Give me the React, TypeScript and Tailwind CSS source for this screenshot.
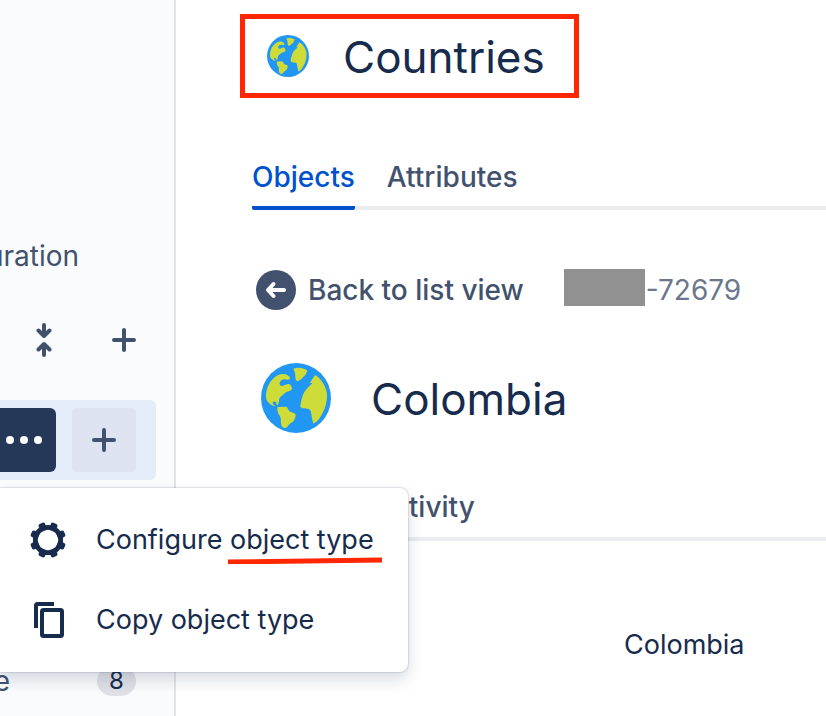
import type { ReactNode } from "react";

function Globe({ className }: { className: string }) {
  return (
    <svg viewBox="0 0 210 210" className={className} aria-hidden="true">
      <circle cx="105" cy="105" r="105" fill="#2196f3" />
      <g fill="#cddc39">
        <path d="M15 102C14 72 32 42 58 34C68 31 80 33 86 42C89 47 84 51 79 50C70 46 58 50 56 59C55 68 62 71 69 67C75 64 84 60 89 66C92 71 95 79 90 82C84 86 77 85 72 90C66 95 62 99 57 103C53 108 55 116 52 123C50 128 46 126 46 120C45 115 38 114 35 118C34 122 38 126 44 130C36 130 29 125 24 120C18 116 15 110 15 102Z" />
        <path d="M97 17C110 12 129 15 139 23C135 36 123 48 109 55C104 52 103 46 103 38C102 29 100 23 97 17Z" />
        <path d="M49 132L77 131C81 136 82 142 88 146C96 149 105 150 104 158C102 167 99 176 90 180C83 184 80 194 72 195C64 193 61 190 60 182C59 174 61 167 57 160C51 152 48 142 49 132Z" />
        <path d="M146 61L162 36C176 43 192 64 197 86C200 103 196 129 186 148C178 164 170 176 158 182C153 174 153 163 151 153C150 144 147 137 139 137C130 137 119 137 118 130C119 119 123 102 128 91C133 80 143 72 151 64C156 59 152 60 146 61Z" />
      </g>
    </svg>
  );
}

function Plus() {
  return (
    <svg viewBox="0 0 24 24" className="size-6" fill="none" stroke="currentColor" strokeWidth="4" strokeLinecap="round" aria-hidden="true">
      <path d="M12 2v20M2 12h20" />
    </svg>
  );
}

function Collapse() {
  return (
    <svg viewBox="0 0 16 34" className="h-[34px] w-4" fill="none" stroke="currentColor" strokeWidth="4" strokeLinecap="round" strokeLinejoin="round" aria-hidden="true">
      <path d="M8 2v11M2.500 7.500 8 13l5.500-5.500M8 32V21M2.500 26.500 8 21l5.500 5.500" />
    </svg>
  );
}

function Gear() {
  return (
    <svg viewBox="0 0 36 36" className="size-9" aria-hidden="true">
      <g fill="currentColor">
        {[22.5, 67.5, 112.5, 157.5, 202.5, 247.5, 292.5, 337.5].map((a) => (
          <rect key={a} x="14.500" y="0" width="7" height="8" rx="2" transform={`rotate(${a} 18 18)`} />
        ))}
      </g>
      <circle cx="18" cy="18" r="12.700" fill="none" stroke="currentColor" strokeWidth="4.800" />
    </svg>
  );
}

function Copy() {
  return (
    <svg viewBox="0 0 36 36" className="size-9" fill="none" stroke="currentColor" strokeWidth="4" aria-hidden="true">
      <path d="M6 26V3.500Q6 2 7.500 2H24" />
      <rect x="12" y="8" width="20" height="26" rx="1.500" />
    </svg>
  );
}

function MenuItem({ icon, children }: { icon: ReactNode; children: ReactNode }) {
  return (
    <button type="button" role="menuitem" className="flex h-20 w-full items-center gap-[30px] pl-[30px] text-left">
      {icon}
      <span>{children}</span>
    </button>
  );
}

function Sidebar() {
  return (
    <aside className="flex w-44 shrink-0 flex-col border-r-2 border-[#e3e4e6] bg-[#fafbfc] pt-59 text-[#42526e]">
      <div className="flex h-10 w-20 items-center justify-end pr-px">
        <a href="#configuration">uration</a>
      </div>

      <div className="flex h-31 items-center justify-end gap-14 pt-1 pr-[38px]">
        <button type="button" aria-label="Collapse all" className="flex w-6 justify-center">
          <Collapse />
        </button>
        <button type="button" aria-label="Add object type">
          <Plus />
        </button>
      </div>

      <div className="relative mr-[18px] flex h-20 items-center justify-between rounded-r-md bg-[#e4ecf9] pr-5">
        <button
          type="button"
          aria-label="More actions"
          aria-expanded="true"
          className="flex h-16 w-14 items-center gap-1.5 rounded-r-md bg-[#253858] pl-1.5"
        >
          <span className="size-2 rounded-full bg-white" />
          <span className="size-2 rounded-full bg-white" />
          <span className="size-2 rounded-full bg-white" />
        </button>
        <button
          type="button"
          aria-label="Add child"
          className="flex size-16 items-center justify-center rounded-md bg-[#dde3f0]"
        >
          <Plus />
        </button>

        <div
          role="menu"
          className="absolute top-full left-0 z-10 mt-2 w-102 rounded-r-lg bg-white py-3 text-[27px] text-[#172b4d] shadow-[0_8px_16px_rgba(9,30,66,0.15),0_0_2px_rgba(9,30,66,0.4)]"
        >
          <MenuItem icon={<Gear />}>
            Configure{" "}
            <span className="relative inline-block">
              object type
              <svg viewBox="0 0 154 8" className="absolute top-full -left-0.5 h-2 w-[154px]" aria-hidden="true">
                <path d="M0 6 154 4" stroke="#ff2600" strokeWidth="5" />
              </svg>
            </span>
          </MenuItem>
          <MenuItem icon={<Copy />}>Copy object type</MenuItem>
        </div>
      </div>

      <div className="mt-[186px] flex h-[30px] items-center justify-between pr-[38px]">
        <a href="#type" className="flex w-2.5 justify-end">
          e
        </a>
        <span className="flex h-[30px] w-[39px] items-center justify-center rounded-full bg-[#dfe1e6] text-2xl text-[#172b4d]">
          8
        </span>
      </div>
    </aside>
  );
}

export default function App() {
  return (
    <div className="flex min-h-screen overflow-hidden bg-white font-['Inter',sans-serif] text-[28px] leading-8 text-[#172b4d]">
      <Sidebar />

      <main className="min-w-0 flex-1 pt-3.5 pl-16">
        <header className="flex h-21 w-[339px] items-center gap-[34px] border-5 border-[#ff2600] pl-[22px]">
          <Globe className="size-[42px] shrink-0" />
          <h1 className="pt-0.5 text-[44px] leading-14">Countries</h1>
        </header>

        <nav className="mt-12 ml-3 flex h-16 gap-8 border-b-4 border-[#ebecf0] font-medium text-[#42526e]">
          <a href="#objects" className="-mb-1 flex items-center rounded-b-xs border-b-4 border-[#0052cc] pt-0.5 text-[#0052cc]">
            Objects
          </a>
          <a href="#attributes" className="-mb-1 flex items-center border-b-4 border-transparent pt-0.5">
            Attributes
          </a>
        </nav>

        <div className="mt-15 ml-4 flex h-10 items-center">
          <a href="#list" className="flex items-center gap-3 font-medium text-[#42526e]">
            <svg viewBox="0 0 40 40" className="size-10" aria-hidden="true">
              <circle cx="20" cy="20" r="20" fill="#42526e" />
              <path d="M28 20H12.500M17.500 14 12 20l5.500 6" fill="none" stroke="#fff" strokeWidth="4" strokeLinecap="round" strokeLinejoin="round" />
            </svg>
            Back to list view
          </a>
          <span className="mr-px mb-1.5 ml-10 h-[37px] w-[81px] bg-[#919191]" />
          <span className="text-[#6b778c]">-72679</span>
        </div>

        <div className="mt-[53px] ml-[21px] flex items-center gap-10">
          <Globe className="size-[70px] shrink-0" />
          <h2 className="pt-0.5 text-[44px] leading-14">Colombia</h2>
        </div>

        <nav className="mt-11 ml-3 flex h-16 border-b-4 border-[#ebecf0] pl-[121px] font-medium text-[#42526e]">
          <a href="#activity" className="flex items-center">
            Activity
          </a>
        </nav>

        <p className="mt-22 pl-96 text-[27px]">Colombia</p>
      </main>
    </div>
  );
}
